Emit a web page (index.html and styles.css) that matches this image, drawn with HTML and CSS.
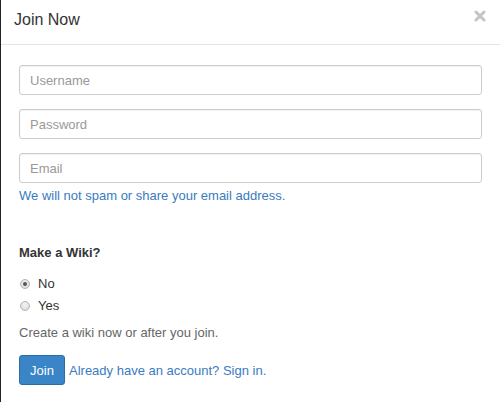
FILE: index.html
```html
<!DOCTYPE html>
<html>
<head>
<meta charset="utf-8">
<link rel="stylesheet" href="styles.css">
</head>
<body>
<div class="modal">
  <div class="modal-header">
    <h4 class="title">Join Now</h4>
    <span class="close" aria-label="Close">
      <svg width="12" height="12" viewBox="0 0 12 12"><path d="M2 2 L10 10 M10 2 L2 10" stroke="#c4c4c4" stroke-width="3" stroke-linecap="round"/></svg>
    </span>
  </div>
  <div class="modal-body">
    <input class="field" type="text" placeholder="Username">
    <input class="field" type="password" placeholder="Password">
    <input class="field" type="text" placeholder="Email">
    <p class="help">We will not spam or share your email address.</p>
    <h5 class="section">Make a Wiki?</h5>
    <label class="radio first"><input type="radio" name="wiki" checked> No</label>
    <label class="radio"><input type="radio" name="wiki"> Yes</label>
    <p class="note">Create a wiki now or after you join.</p>
    <div class="actions">
      <button class="btn">Join</button>
      <a class="link" href="#">Already have an account? Sign in.</a>
    </div>
  </div>
</div>
</body>
</html>
```
FILE: styles.css
```css
html, body {
  margin: 0;
  padding: 0;
  background: #fff;
}
body {
  font-family: "Liberation Sans", Arial, sans-serif;
  font-size: 13px;
  color: #333;
}
.modal {
  width: 499px;
  height: 402px;
  border-left: 1px solid #222;
  box-sizing: content-box;
}
.modal-header {
  border-bottom: 1px solid #e5e5e5;
  display: flex;
  align-items: center;
  justify-content: space-between;
  padding: 0 14px 0 13px;
  box-sizing: border-box;
  height: 45px;
}
.title {
  margin: 0;
  font-size: 16px;
  font-weight: normal;
  color: #333;
  position: relative;
  top: -2px;
}
.close {
  display: block;
  width: 12px;
  height: 12px;
  position: relative;
  top: -6px;
}
.close svg {
  display: block;
}
.modal-body {
  padding: 20px 17px 0 18px;
  display: flex;
  flex-direction: column;
  align-items: flex-start;
}
.field {
  width: 463px;
  height: 30px;
  box-sizing: border-box;
  border: 1px solid #ccc;
  border-radius: 3px;
  padding: 0 10px;
  font-family: "Liberation Sans", Arial, sans-serif;
  font-size: 13px;
  color: #555;
  margin: 0 0 14px 0;
  box-shadow: inset 0 1px 1px rgba(0,0,0,0.06);
}
.field::placeholder {
  color: #999;
}
.field:last-of-type {
  margin-bottom: 0;
}
.help {
  margin: 4px 0 0 0;
  color: #3a7bbf;
  line-height: 18px;
}
.section {
  margin: 39px 0 0 0;
  font-size: 13px;
  font-weight: bold;
  line-height: 18px;
}
.radio {
  display: flex;
  align-items: center;
  line-height: 18px;
  margin-top: 4px;
  color: #333;
}
.radio.first {
  margin-top: 13px;
}
.radio input {
  appearance: none;
  -webkit-appearance: none;
  margin: 0 8px 0 1px;
  width: 10px;
  height: 10px;
  border-radius: 50%;
  border: 1px solid #b5b5b5;
  background: radial-gradient(circle at 50% 35%, #f4f4f4 0%, #d6d6d6 100%);
  box-sizing: border-box;
  position: relative;
}
.radio input:checked::after {
  content: "";
  position: absolute;
  left: 2px;
  top: 2px;
  width: 4px;
  height: 4px;
  border-radius: 50%;
  background: #555;
}
.note {
  margin: 9px 0 0 0;
  color: #666;
  line-height: 18px;
}
.actions {
  margin-top: 13px;
  display: flex;
  align-items: center;
  gap: 4px;
}
.btn {
  height: 30px;
  width: 46px;
  border: 1px solid #2e6da4;
  background: #3a85c8;
  color: #fff;
  border-radius: 3px;
  font-family: "Liberation Sans", Arial, sans-serif;
  font-size: 13px;
  padding: 0;
}
.link {
  color: #3a7bbf;
  text-decoration: none;
}
```
